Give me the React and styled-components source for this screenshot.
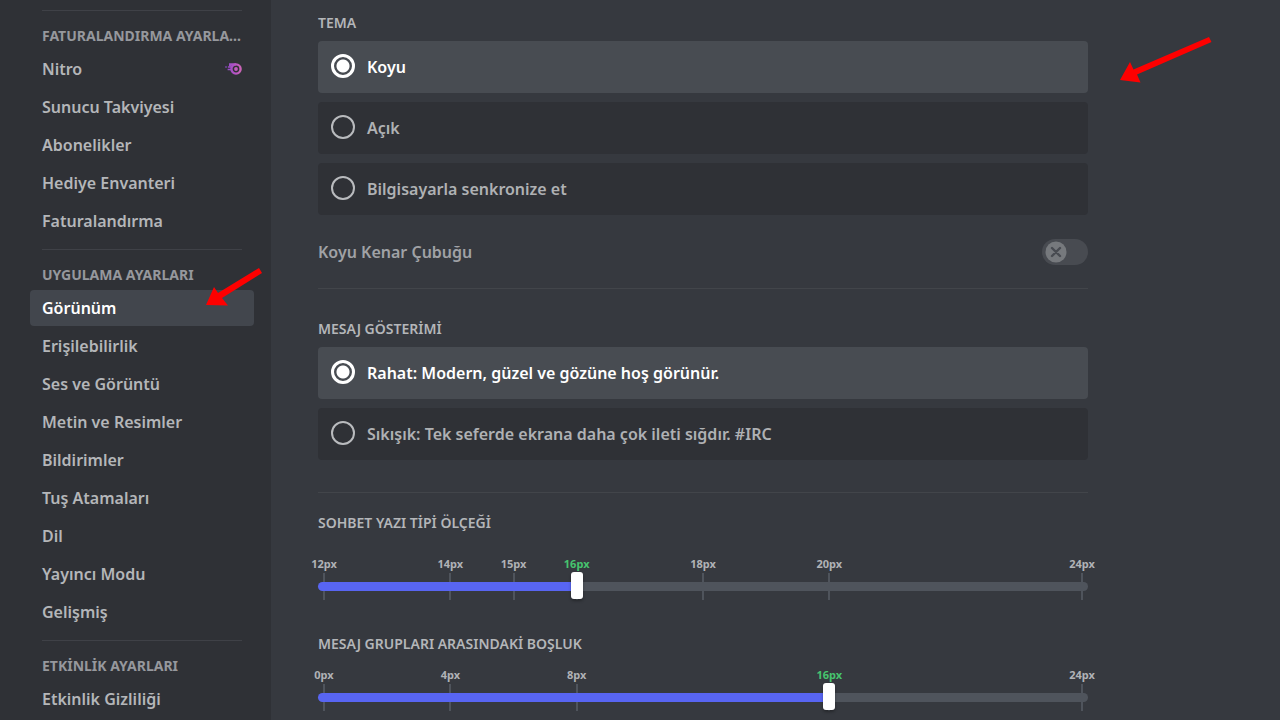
import React, { useState } from "react";
import styled, { createGlobalStyle, css } from "styled-components";

const GlobalStyle = createGlobalStyle`
  *, *::before, *::after { box-sizing: border-box; }
  body {
    margin: 0;
    background: #36393f;
    color: #b9bbbe;
    font-family: "Noto Sans", "Open Sans", sans-serif;
    font-size: 16px;
  }
`;

const Page = styled.div`
  position: relative;
  display: flex;
  height: 100vh;
  overflow: hidden;
`;

const Sidebar = styled.nav`
  flex: 0 0 271px;
  min-width: 0;
  padding: 0 17px 0 30px;
  background: #2f3136;
`;

const NavSection = styled.section`
  padding-top: 10px;
`;

const NavDivider = styled.hr`
  height: 1px;
  margin: 0 12px;
  border: 0;
  background: #3f4147;
`;

const NavHeading = styled.h2`
  height: 40px;
  margin: 0 12px;
  padding-top: 5px;
  overflow: hidden;
  color: #96989d;
  font-size: 14px;
  font-weight: 700;
  line-height: 40px;
  text-overflow: ellipsis;
  white-space: nowrap;
`;

const NavList = styled.ul`
  display: flex;
  flex-direction: column;
  gap: 2px;
  margin: 0;
  padding: 0;
  list-style: none;
`;

const NavLink = styled.a`
  display: flex;
  align-items: center;
  justify-content: space-between;
  height: 36px;
  padding: 0 12px;
  border-radius: 4px;
  color: #b4b6b9;
  font-weight: 600;
  line-height: 20px;
  text-decoration: none;
  ${(p) => p.$active && css`
    background: #42464d;
    color: #fff;
  `}
`;

const Main = styled.main`
  flex: 1;
  min-width: 0;
  padding: 13px 48px 0 47px;
`;

const Content = styled.div`
  max-width: 770px;
`;

const Group = styled.fieldset`
  min-width: 0;
  margin: 0;
  padding: 0;
  border: 0;
`;

const headingText = css`
  color: #b4b6b9;
  font-size: 14px;
  font-weight: 600;
  line-height: 20px;
`;

const Legend = styled.legend`
  ${headingText}
  margin-bottom: 8px;
  padding: 0;
`;

const Options = styled.div`
  display: flex;
  flex-direction: column;
  gap: 9px;
`;

const OptionCard = styled.label`
  display: flex;
  align-items: center;
  gap: 12px;
  height: 52px;
  padding: 0 13px;
  border-radius: 4px;
  background: #2f3136;
  color: #afb1b4;
  font-weight: 600;
  line-height: 20px;
  cursor: pointer;
  &:has(input:checked) {
    background: #484c52;
    color: #fff;
  }
`;

const Radio = styled.input`
  appearance: none;
  flex: none;
  width: 24px;
  height: 24px;
  margin: 0 0 3px;
  border: 2px solid #b9bbbe;
  border-radius: 50%;
  &:checked {
    border: 3px solid #fff;
    background: radial-gradient(circle, #fff 6px, transparent 7px);
  }
`;

const Divider = styled.hr`
  height: 1px;
  margin: 0;
  border: 0;
  background: #42454a;
`;

const SwitchRow = styled.div`
  display: flex;
  align-items: center;
  justify-content: space-between;
  height: 73px;
  color: #a0a2a6;
  font-weight: 600;
`;

const SwitchControl = styled.span`
  display: grid;
  width: 46px;
  height: 26px;
  > * { grid-area: 1 / 1; }
`;

const SwitchInput = styled.input`
  appearance: none;
  width: 46px;
  height: 26px;
  margin: 0;
  border-radius: 13px;
  background: #484b51;
`;

const SwitchKnob = styled.svg`
  margin: 2px 0 0 3px;
  pointer-events: none;
`;

const SliderGroup = styled.section`
  display: flex;
  flex-direction: column;
  gap: ${(p) => p.$gap}px;
`;

const SliderHeading = styled.label`
  ${headingText}
`;

const SliderBody = styled.div`
  display: grid;
  > * { grid-area: 1 / 1; }
`;

const Marks = styled.div`
  display: grid;
  grid-template-columns: repeat(${(p) => p.$steps}, minmax(0, 1fr)) 0;
  padding: 0 6px;
`;

const Mark = styled.div`
  display: flex;
  flex-direction: column;
  align-items: center;
  grid-row: 1;
  grid-column: ${(p) => p.$column};
  width: 0;
  color: ${(p) => (p.$current ? "#46c46e" : "#b0b2b6")};
  font-size: 11px;
  font-weight: 700;
  line-height: 16px;
  white-space: nowrap;
  &::after {
    content: "";
    width: 2px;
    height: 27px;
    margin-top: 1px;
    background: #4f545c;
  }
`;

const Range = styled.input`
  appearance: none;
  align-self: end;
  width: 100%;
  height: 27px;
  margin: 0;
  background: transparent;
  &::-webkit-slider-runnable-track {
    height: 9px;
    border-radius: 5px;
    background: linear-gradient(to right, #5865f2 var(--fill), #4f545c var(--fill));
  }
  &::-webkit-slider-thumb {
    appearance: none;
    width: 12px;
    height: 27px;
    margin-top: -10px;
    border-radius: 3px;
    background: #fff;
    box-shadow: 0 2px 3px rgba(0, 0, 0, 0.3);
  }
`;

const Arrows = styled.svg`
  position: absolute;
  top: 0;
  left: 0;
  pointer-events: none;
`;

const Gap = styled.div`
  padding-top: ${(p) => p.$size}px;
`;

function NitroIcon() {
  return (
    <svg width="17" height="14" viewBox="0 0 17 14" fill="none" aria-hidden="true">
      <defs>
        <linearGradient id="nitro" x1="0" y1="0" x2="17" y2="0" gradientUnits="userSpaceOnUse">
          <stop offset="0" stopColor="#8a48c8" />
          <stop offset="0.6" stopColor="#b653c4" />
          <stop offset="1" stopColor="#cf68b4" />
        </linearGradient>
      </defs>
      <path d="M4 1.2h7v2.4H6.6v1H4z" fill="url(#nitro)" />
      <path d="M0 4.4h2.2v1.2H0zM3 4.2h4v1.6H3zM2.6 6.8h3.8v1.4H2.6z" fill="url(#nitro)" />
      <circle cx="11" cy="7" r="4.6" stroke="url(#nitro)" strokeWidth="2.4" />
      <circle cx="11" cy="7" r="1.9" fill="#c45cbd" />
    </svg>
  );
}

const sections = [
  { title: "FATURALANDIRMA AYARLARI", items: ["Nitro", "Sunucu Takviyesi", "Abonelikler", "Hediye Envanteri", "Faturalandırma"] },
  {
    title: "UYGULAMA AYARLARI",
    items: ["Görünüm", "Erişilebilirlik", "Ses ve Görüntü", "Metin ve Resimler", "Bildirimler", "Tuş Atamaları", "Dil", "Yayıncı Modu", "Gelişmiş"],
  },
  { title: "ETKİNLİK AYARLARI", items: ["Etkinlik Gizliliği"] },
];

function RadioGroup({ name, legend, options }) {
  const [value, setValue] = useState(options[0]);
  return (
    <Group>
      <Legend>{legend}</Legend>
      <Options>
        {options.map((option) => (
          <OptionCard key={option}>
            <Radio type="radio" name={name} checked={value === option} onChange={() => setValue(option)} />
            {option}
          </OptionCard>
        ))}
      </Options>
    </Group>
  );
}

function Slider({ id, label, min, max, unit, marks, initial, gap }) {
  const [value, setValue] = useState(initial);
  const fill = `${((value - min) / (max - min)) * 100}%`;
  return (
    <SliderGroup $gap={gap}>
      <SliderHeading htmlFor={id}>{label}</SliderHeading>
      <SliderBody>
        <Marks $steps={(max - min) / unit}>
          {marks.map((mark) => (
            <Mark key={mark} $column={(mark - min) / unit + 1} $current={mark === value}>
              {mark}px
            </Mark>
          ))}
        </Marks>
        <Range
          id={id}
          type="range"
          min={min}
          max={max}
          value={value}
          onChange={(e) => setValue(Number(e.target.value))}
          style={{ "--fill": fill }}
        />
      </SliderBody>
    </SliderGroup>
  );
}

export default function App() {
  return (
    <Page lang="tr">
      <GlobalStyle />
      <Sidebar>
        {sections.map((section) => (
          <NavSection key={section.title}>
            <NavDivider />
            <NavHeading>{section.title}</NavHeading>
            <NavList>
              {section.items.map((item) => (
                <li key={item}>
                  <NavLink href="#" $active={item === "Görünüm"}>
                    {item}
                    {item === "Nitro" && <NitroIcon />}
                  </NavLink>
                </li>
              ))}
            </NavList>
          </NavSection>
        ))}
      </Sidebar>
      <Main>
        <Content>
          <RadioGroup name="theme" legend="TEMA" options={["Koyu", "Açık", "Bilgisayarla senkronize et"]} />
          <SwitchRow>
            <label htmlFor="dark-sidebar">Koyu Kenar Çubuğu</label>
            <SwitchControl>
              <SwitchInput id="dark-sidebar" type="checkbox" role="switch" disabled />
              <SwitchKnob width="22" height="22" viewBox="0 0 22 22" aria-hidden="true">
                <circle cx="11" cy="11" r="10.5" fill="#76797d" />
                <path d="M7 7l8 8M15 7l-8 8" stroke="#484b51" strokeWidth="2.4" strokeLinecap="round" />
              </SwitchKnob>
            </SwitchControl>
          </SwitchRow>
          <Divider />
          <Gap $size={30}>
            <RadioGroup
              name="display"
              legend="MESAJ GÖSTERİMİ"
              options={["Rahat: Modern, güzel ve gözüne hoş görünür.", "Sıkışık: Tek seferde ekrana daha çok ileti sığdır. #IRC"]}
            />
          </Gap>
          <Gap $size={32}>
            <Divider />
          </Gap>
          <Gap $size={20}>
            <Slider id="font-scale" label="SOHBET YAZI TİPİ ÖLÇEĞİ" min={12} max={24} unit={1} marks={[12, 14, 15, 16, 18, 20, 24]} initial={16} gap={23} />
          </Gap>
          <Gap $size={34}>
            <Slider id="group-space" label="MESAJ GRUPLARI ARASINDAKİ BOŞLUK" min={0} max={24} unit={4} marks={[0, 4, 8, 16, 24]} initial={16} gap={13} />
          </Gap>
        </Content>
      </Main>
      <Arrows width="1280" height="320" viewBox="0 0 1280 320" aria-hidden="true">
        <path d="M206 305L214 287L218 293L259 268L262 273L222 298L228 305.500Z" fill="#fe0000" />
        <path d="M1120 80L1130 62L1133.500 69.500L1209 37L1211.500 42L1137 74.500L1140.500 82.500Z" fill="#fe0000" />
      </Arrows>
    </Page>
  );
}
